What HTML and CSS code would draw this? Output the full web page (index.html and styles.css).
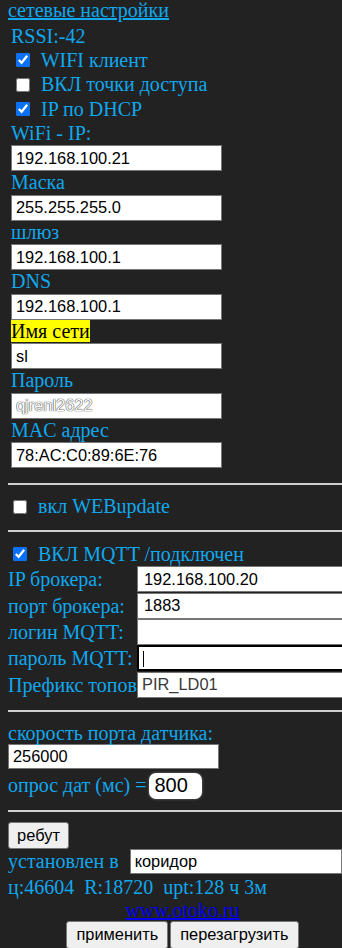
FILE: index.html
```html
<!DOCTYPE html>
<html lang="ru">
<head>
  <meta charset="UTF-8">
  <meta name="viewport" content="width=device-width, initial-scale=1.0">
  <title>настройки</title>
  <link rel="stylesheet" href="styles.css">
</head>
<body>
  <div class="page">
    <a class="title" href="#">сетевые настройки</a>

    <!-- сеть -->
    <div class="net">
      <div class="rssi">RSSI:-42</div>
      <label class="chk"><input type="checkbox" checked> WIFI клиент</label>
      <label class="chk"><input type="checkbox"> ВКЛ точки доступа</label>
      <label class="chk"><input type="checkbox" checked> IP по DHCP</label>

      <div class="cap">WiFi - IP:</div>
      <input class="field" type="text" value="192.168.100.21">
      <div class="cap">Маска</div>
      <input class="field" type="text" value="255.255.255.0">
      <div class="cap">шлюз</div>
      <input class="field" type="text" value="192.168.100.1">
      <div class="cap">DNS</div>
      <input class="field" type="text" value="192.168.100.1">
      <div class="cap"><span class="mark">Имя сети</span></div>
      <input class="field" type="text" value="sl">
      <div class="cap">Пароль</div>
      <input class="field pass" type="text" value="qjrenl2622">
      <div class="cap">MAC адрес</div>
      <input class="field" type="text" value="78:AC:C0:89:6E:76">
    </div>

    <hr class="sep sep-first">
    <label class="chk block"><input type="checkbox"> вкл WEBupdate</label>
    <hr class="sep">
    <label class="chk block mqtt-on"><input type="checkbox" checked> ВКЛ MQTT /подключен</label>

    <!-- mqtt -->
    <div class="mqtt">
      <span class="mlabel">IP брокера:</span><input class="mfield" type="text" value="192.168.100.20">
      <span class="mlabel">порт брокера:</span><input class="mfield" type="text" value="1883">
      <span class="mlabel">логин MQTT:</span><input class="mfield" type="text" value="">
      <span class="mlabel">пароль MQTT:</span><input class="mfield active" type="text" value="">
      <span class="mlabel">Префикс топов</span><input class="mfield prefix" type="text" value="PIR_LD01">
    </div>

    <hr class="sep sep-mqtt">
    <div class="cap speed">скорость порта датчика:</div>
    <input class="field" type="text" value="256000">
    <div class="poll">опрос дат (мс) =<input class="small" type="text" value="800"></div>

    <hr class="sep sep-poll">
    <button class="btn reboot">ребут</button>
    <div class="place">установлен в <input class="field place-in" type="text" value="коридор"></div>
    <div class="stats">ц:46604&nbsp;&nbsp;R:18720&nbsp;&nbsp;upt:128 ч 3м</div>
    <div class="site"><a href="#">www.otoko.ru</a></div>
    <div class="actions">
      <button class="btn">применить</button>
      <button class="btn">перезагрузить</button>
    </div>
  </div>
</body>
</html>
```

FILE: styles.css
```css
html {
  overflow-x: hidden;
  background: #222;
}
body {
  margin: 0 0 0 8px;
  background: #222;
  color: #10a8ee;
  font-family: "Liberation Serif", "Times New Roman", serif;
  font-size: 20px;
}
.page {
  width: 349px;
}
.title {
  display: block;
  line-height: 20px;
  color: #10a8ee;
}
.net {
  padding-left: 3px;
}
.rssi {
  margin-top: 4px;
  line-height: 24px;
}
.chk {
  display: flex;
  align-items: center;
  height: 24.5px;
  white-space: pre;
}
.chk input {
  width: 14px;
  height: 14px;
  margin: 0 6px 0 5px;
  accent-color: #0a70f5;
}
.cap {
  line-height: 23.5px;
  height: 23.5px;
}
.mark {
  background: #ff0;
  color: #000;
}
.field {
  display: block;
  box-sizing: border-box;
  width: 211px;
  height: 26px;
  margin: 0;
  padding: 0 4px;
  border: 1px solid #767676;
  background: #fff;
  color: #000;
  font-family: "Liberation Sans", Arial, sans-serif;
  font-size: 16.4px;
}
.pass {
  color: #fff;
  text-shadow: 0 0 1px #222, 0 0 1px #444;
}
.sep {
  margin: 0;
  border: 0;
  border-top: 2px solid #cfcfcf;
}
.sep-first {
  margin-top: 14.5px;
}
.block {
  height: 24px;
  margin: 10px 0 11px;
}
.block input {
  margin-left: 5px;
}
.mqtt-on {
  margin: 10.5px 0 0;
}
.mqtt {
  display: grid;
  grid-template-columns: 129px 220px;
  grid-auto-rows: 26.4px;
  align-items: center;
}
.mlabel {
  white-space: nowrap;
  line-height: 24px;
}
.mfield {
  box-sizing: border-box;
  width: 220px;
  height: 26px;
  margin: 0;
  padding: 0 6px;
  border: 1px solid #767676;
  background: #fff;
  color: #000;
  font-family: "Liberation Sans", Arial, sans-serif;
  font-size: 16.4px;
}
/* поле в фокусе, с кареткой */
.mfield.active {
  border: 2px solid #000;
  outline: none;
  background: linear-gradient(#000, #000) no-repeat 4px 4px / 1px 16px, #fff;
}
.prefix {
  color: #3a3a3a;
  padding-left: 4px;
}
.sep-mqtt {
  margin-top: 12px;
}
.speed {
  margin-top: 10px;
  height: 22px;
  line-height: 22px;
}
.speed + .field {
  height: 25px;
}
.poll {
  margin-top: 4px;
  height: 26px;
  display: flex;
  align-items: center;
  white-space: pre;
}
.small {
  box-sizing: border-box;
  width: 53px;
  height: 26px;
  margin: 0 0 0 2px;
  padding: 0 6px;
  border: 0;
  border-radius: 7px;
  background: #fff;
  color: #000;
  font-family: "Liberation Sans", Arial, sans-serif;
  font-size: 20px;
  box-shadow: 0 0 3px rgba(255, 255, 255, 0.35);
}
.sep-poll {
  margin-top: 11px;
}
.btn {
  box-sizing: border-box;
  height: 27px;
  margin: 0;
  padding: 0 8px;
  border: 1px solid #767676;
  border-radius: 3px;
  background: #efefef;
  color: #000;
  font-family: "Liberation Sans", Arial, sans-serif;
  font-size: 16.4px;
}
.reboot {
  display: block;
  width: 61px;
  margin-top: 10px;
}
.place {
  display: flex;
  align-items: center;
  height: 25px;
  white-space: pre;
}
.place-in {
  width: 212px;
  height: 25px;
  margin-left: 6px;
}
.stats {
  line-height: 24px;
  margin-top: 1px;
}
.site {
  text-align: center;
  line-height: 22px;
}
.site a {
  color: #00e;
}
.actions {
  display: flex;
  justify-content: center;
  gap: 2px;
}
.actions .btn {
  height: 28px;
  padding: 0 9px;
}
```
